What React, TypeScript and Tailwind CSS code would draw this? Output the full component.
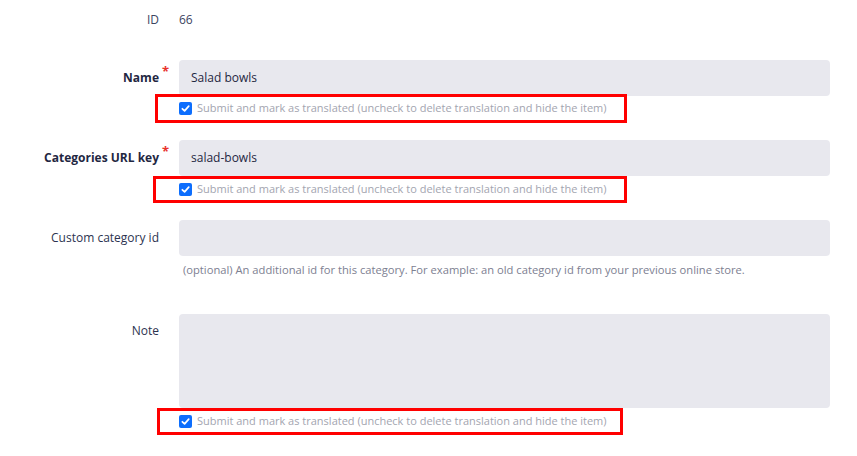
import React from 'react';

// Translation form — category fields with "mark as translated" checks

const labelCls = 'h-9 flex items-center justify-end text-[12px] text-[#2c3350] whitespace-nowrap';

function Check() {
  return (
    <span className="w-[13px] h-[13px] shrink-0 rounded-[2px] bg-[#0d6efd] flex items-center justify-center">
      <svg width="9" height="9" viewBox="0 0 10 10" fill="none">
        <path d="M1.5 5.3 L4 7.7 L8.6 2.4" stroke="#fff" strokeWidth="1.9" strokeLinecap="round" strokeLinejoin="round" />
      </svg>
    </span>
  );
}

function Translated({ className = '' }: { className?: string }) {
  return (
    <div className={`flex items-center gap-[5px] border-[3px] border-[#ff0000] ${className}`}>
      <Check />
      <span className="text-[11px] text-[#a3a5b0] whitespace-nowrap">
        Submit and mark as translated (uncheck to delete translation and hide the item)
      </span>
    </div>
  );
}

function RequiredLabel({ text }: { text: string }) {
  return (
    <div className={labelCls}>
      <span className="relative font-bold text-[#1f2742]">
        {text}
        <span className="absolute -right-[10px] -top-[7px] text-[#e8322b] text-[13px] font-bold">*</span>
      </span>
    </div>
  );
}

export default function App() {
  return (
    <div className="w-[857px] h-[456px] bg-white overflow-hidden pr-[27px]" style={{ fontFamily: '"Open Sans", "Noto Sans", sans-serif' }}>
      {/* ID */}
      <div className="grid grid-cols-[159px_1fr] gap-x-5 pt-px h-[38px] items-center">
        <div className="text-right text-[12px] text-[#3c4460]">ID</div>
        <div className="text-[12px] text-[#3c4460]">66</div>
      </div>

      {/* Name */}
      <div className="grid grid-cols-[159px_1fr] gap-x-5 mt-[22px]">
        <RequiredLabel text="Name" />
        <div>
          <div className="h-9 rounded bg-[#e8e8ee] flex items-center pl-3 text-[12px] text-[#1f2742]">Salad bowls</div>
          <Translated className="-mt-[2px] -ml-6 w-[472px] h-[29px] pl-[21px]" />
        </div>
      </div>

      {/* URL key */}
      <div className="grid grid-cols-[159px_1fr] gap-x-5 mt-[17px]">
        <RequiredLabel text="Categories URL key" />
        <div>
          <div className="h-9 rounded bg-[#e8e8ee] flex items-center pl-3 text-[12px] text-[#1f2742]">salad-bowls</div>
          <Translated className="-ml-[26px] w-[474px] h-[27px] pl-[23px]" />
        </div>
      </div>

      {/* Custom id */}
      <div className="grid grid-cols-[159px_1fr] gap-x-5 mt-[17px]">
        <div className={labelCls}>Custom category id</div>
        <div>
          <div className="h-9 rounded bg-[#e8e8ee]" />
          <p className="pl-1 mt-[6px] leading-[16px] text-[11.2px] text-[#7d8091] whitespace-nowrap">
            (optional) An additional id for this category. For example: an old category id from your previous online store.
          </p>
        </div>
      </div>

      {/* Note */}
      <div className="grid grid-cols-[159px_1fr] gap-x-5 mt-[36px]">
        <div className={`${labelCls} !items-start pt-[8px]`}>Note</div>
        <div>
          <div className="h-[94px] rounded bg-[#e8e8ee]" />
          <Translated className="-ml-[22px] w-[466px] h-[27px] pl-[19px]" />
        </div>
      </div>
    </div>
  );
}
